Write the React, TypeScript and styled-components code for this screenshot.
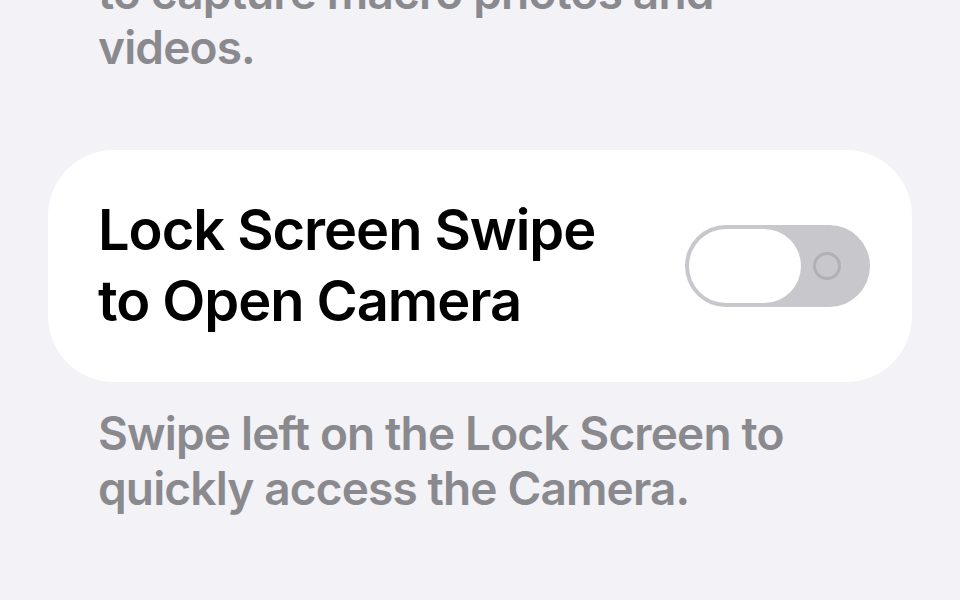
import React from "react";
import styled, { createGlobalStyle } from "styled-components";

const Global = createGlobalStyle`
  html, body {
    margin: 0;
    padding: 0;
    background: #f2f2f7;
    overflow: hidden;
  }
  body {
    font-family: Inter, "Noto Sans", "Liberation Sans", sans-serif;
    -webkit-font-smoothing: antialiased;
  }
`;

const Page = styled.div`
  width: 960px;
  height: 600px;
  background: #f2f2f7;
  display: flex;
  flex-direction: column;
  overflow: hidden;
`;

const Footer = styled.p<{ $top?: number }>`
  margin: ${(p) => p.$top ?? 0}px 0 0 0;
  padding: 0 60px 0 98px;
  font-size: 46px;
  line-height: 55px;
  font-weight: 600;
  color: #8a8a8e;
  letter-spacing: -0.85px;
`;

const Card = styled.div`
  margin: 75px 48px 0 48px;
  background: #ffffff;
  border-radius: 66px;
  padding: 45px 42px 45px 50px;
  display: flex;
  align-items: center;
  justify-content: space-between;
`;

const Title = styled.div`
  font-size: 56px;
  line-height: 71px;
  font-weight: 600;
  color: #000000;
  letter-spacing: -1.05px;
`;

const Track = styled.div`
  width: 185px;
  height: 82px;
  border-radius: 41px;
  background: #c7c7cc;
  display: flex;
  align-items: center;
  padding: 0 4px;
  box-sizing: border-box;
  flex-shrink: 0;
`;

const Knob = styled.div`
  width: 112px;
  height: 74px;
  border-radius: 37px;
  background: #ffffff;
`;

const OffMark = styled.div`
  width: 22px;
  height: 22px;
  border-radius: 50%;
  border: 3px solid #b0b0b5;
  margin-left: 12px;
`;

export default function App() {
  return (
    <>
      <Global />
      <Page>
        <Footer $top={-35}>
          to capture macro photos and
          <br />
          videos.
        </Footer>
        <Card>
          <Title>
            Lock Screen Swipe
            <br />
            to Open Camera
          </Title>
          <Track>
            <Knob />
            <OffMark />
          </Track>
        </Card>
        <Footer $top={24}>
          Swipe left on the Lock Screen to
          <br />
          quickly access the Camera.
        </Footer>
      </Page>
    </>
  );
}
